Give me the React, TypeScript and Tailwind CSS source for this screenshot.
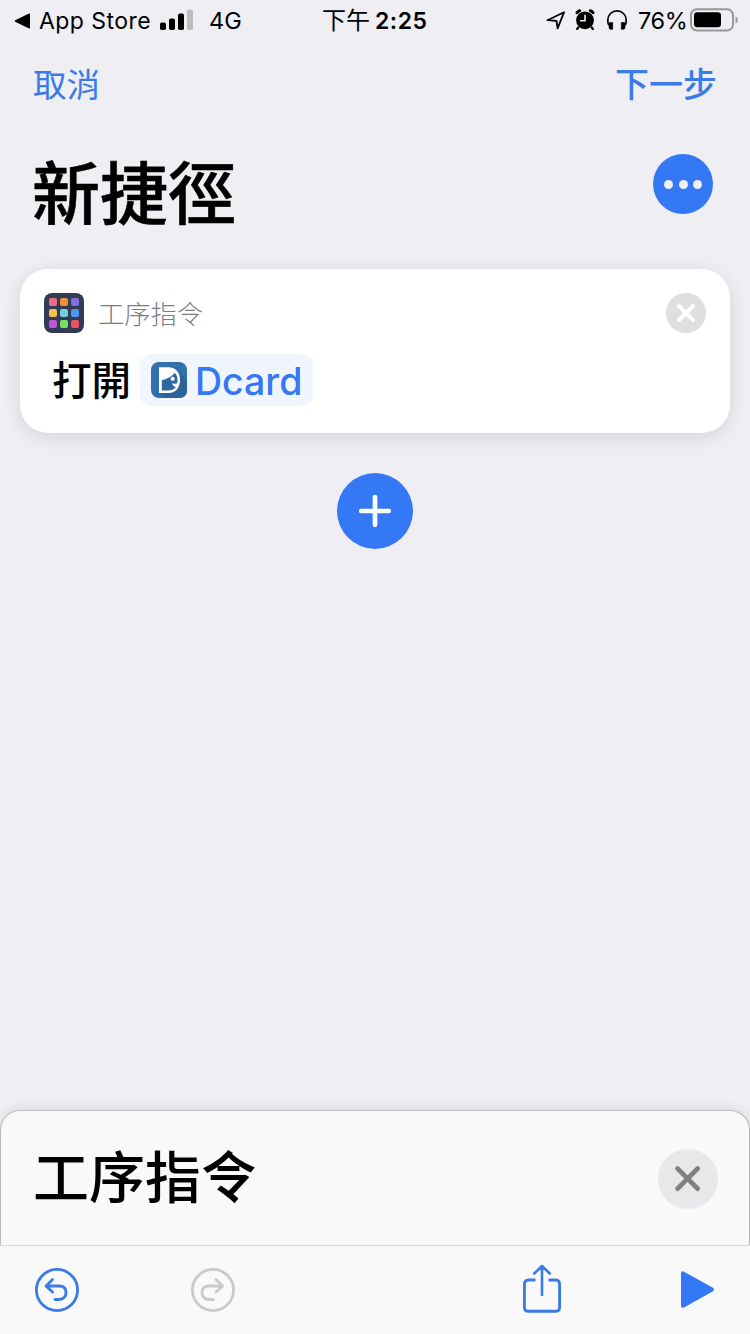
import React from 'react';

const gridColors = ['#ea6f86', '#ee9135', '#7e70e0', '#f4c150', '#6fd0dd', '#4b98ee', '#c455d8', '#76e062', '#ea5360'];

function StatusBar() {
  return (
    <header className="flex h-10 shrink-0 items-center text-black">
      <svg className="ml-[14px] mt-[1px]" width="17" height="16" viewBox="0 0 17 16">
        <path d="M1.2 7.2 14.5.7Q16 .2 16 1.6v12.8q0 1.4-1.5.9L1.2 8.800Q0 8 1.2 7.200z" />
      </svg>
      <span className="ml-[8px] w-[112px] whitespace-nowrap pt-[2px] text-[23px] leading-10 tracking-[0.45px]">App Store</span>
      <svg className="ml-[9px] -mt-[1px]" width="34" height="22" viewBox="0 0 34 22">
        <rect x="0" y="13.5" width="6" height="7.5" rx="1.8" />
        <rect x="9" y="9.5" width="6" height="11.5" rx="1.8" />
        <rect x="18" y="4.5" width="6" height="16.5" rx="1.8" />
        <rect x="27" y="0.5" width="6" height="20.5" rx="1.8" fill="#bdbdc0" />
      </svg>
      <span className="ml-[15px] w-[113px] pt-[2px] text-[23.5px] leading-10">4G</span>
      <span className="flex w-[106px] items-center whitespace-nowrap pt-[2px]">
        <span className="w-[53px] text-[24px] leading-10">下午</span>
        <span className="text-[23px] font-semibold leading-10 tracking-[0.5px]">2:25</span>
      </span>
      <svg className="ml-[118px]" width="20" height="22" viewBox="0 0 20 22" fill="none" stroke="black" strokeWidth="1.8" strokeLinejoin="round">
        <path d="M1.500 11.200 18 3.300 11.600 19.400 10.500 11.800z" />
      </svg>
      <svg className="ml-[8px] -mt-[1px]" width="22" height="24" viewBox="0 0 22 24" fill="none" stroke="black">
        <circle cx="11" cy="12.300" r="8.900" fill="black" stroke="none" />
        <path d="M3 4.700Q4 3.200 5.700 2.700M19 4.700Q18 3.200 16.300 2.700" strokeWidth="3" strokeLinecap="round" />
        <path d="m4.500 19.300-1.400 1.700M17.500 19.300l1.400 1.700" strokeWidth="2.2" strokeLinecap="round" />
        <path d="M11 6.800v6H6" stroke="#efeef4" strokeWidth="1.6" />
      </svg>
      <svg className="ml-[10px]" width="22" height="22" viewBox="0 0 22 22" fill="none" stroke="black">
        <path d="M2.900 16Q1.800 15 1.800 11a9.200 9.200 0 0 1 18.400 0q0 4-1.100 5" strokeWidth="1.7" />
        <path d="M3.500 13.500h3.200v6.800H4.800q-1.800 0-1.800-1.600v-4zM18.500 13.500h-3.200v6.800h1.900q1.800 0 1.800-1.600v-4z" fill="black" strokeWidth="0.6" />
      </svg>
      <span className="ml-[10px] w-[50px] whitespace-nowrap pt-[2px] text-[23.5px] leading-10 tracking-[-0.4px]">76%</span>
      <svg className="ml-[2px] -mt-[1px]" width="48" height="24" viewBox="0 0 48 24">
        <rect x="1" y="1.2" width="42" height="21.3" rx="6" fill="none" stroke="#98989c" strokeWidth="2" />
        <rect x="4" y="4.3" width="27" height="15" rx="3.2" />
        <path d="M45.500 8.200q2.300 1 2.300 3.700t-2.300 3.700z" fill="#98989c" />
      </svg>
    </header>
  );
}

function DcardIcon() {
  return (
    <svg width="36" height="36" viewBox="0 0 36 36" className="shrink-0">
      <rect width="36" height="36" rx="8" fill="#3170ab" />
      <path d="M26 8.500 36 19v9q0 8-8 8H14l-5-5z" fill="#2a6299" />
      <path d="M8 5.300h9.500C25 5.300 29 11 29 18s-4 13-11.500 13H8z" fill="white" />
      <path d="M10.800 18.200Q19.500 16.500 23.800 10.800 26.600 13.500 26.600 18t-2 7.500Q22 28.500 17.300 28.500H10.800z" fill="#2c67a0" />
      <circle cx="21.700" cy="16.800" r="2.1" fill="white" />
      <path d="M21 21.300q2.800 1 6.200-.3l-.8 4.300q-4.200-.2-5.400-4z" fill="white" />
    </svg>
  );
}

function ActionCard() {
  return (
    <section className="mx-5 mt-[29px] h-[164px] shrink-0 rounded-[28px] bg-white px-6 pt-6 shadow-[0_4px_20px_rgba(0,0,0,0.11)]">
      <div className="flex h-10 items-center">
        <div className="grid h-10 w-10 grid-cols-3 gap-[3px] rounded-[8px] bg-[#333a54] p-[5px]">
          {gridColors.map((color) => (
            <span key={color} className="rounded-[2px]" style={{ backgroundColor: color }} />
          ))}
        </div>
        <span className="ml-[14px] pt-[3px] text-[26.3px] font-light leading-10 text-[#7c7c80]">工序指令</span>
        <button className="ml-auto flex h-10 w-10 items-center justify-center rounded-full bg-[#dfdfe1]" aria-label="移除">
          <svg width="20" height="20" viewBox="0 0 20 20" stroke="white" strokeWidth="4" strokeLinecap="round">
            <path d="m3 3 14 14M17 3 3 17" />
          </svg>
        </button>
      </div>
      <div className="mt-[21px] flex h-[52px] items-center">
        <span className="ml-[8px] w-[80px] whitespace-nowrap pt-[2px] text-[39.5px] font-medium leading-[52px] text-black">打開</span>
        <span className="ml-2 flex h-[52px] w-[173px] items-center rounded-[12px] bg-[#f0f5fe] pl-[11px]">
          <DcardIcon />
          <span className="ml-[8px] pt-[4px] text-[37.5px] font-medium leading-[52px] text-[#3478f6]">Dcard</span>
        </span>
      </div>
    </section>
  );
}

function Toolbar() {
  return (
    <nav className="flex h-[89px] shrink-0 items-start border-t border-[#dadadc] bg-[#f9f9f9] text-[#3b7be8]">
      <svg className="ml-[35px] mt-[22px]" width="44" height="44" viewBox="0 0 44 44" fill="none" stroke="currentColor" strokeWidth="2.8" strokeLinecap="round" strokeLinejoin="round">
        <circle cx="22" cy="22" r="20.6" />
        <path d="m17.500 11.500-6.500 6.500 6.500 6M11.500 18H24q7 0 7 6.500T24 31.500h-4" />
      </svg>
      <svg className="ml-[112px] mt-[22px] text-[#cacaca]" width="44" height="44" viewBox="0 0 44 44" fill="none" stroke="currentColor" strokeWidth="2.8" strokeLinecap="round" strokeLinejoin="round">
        <circle cx="22" cy="22" r="20.6" />
        <path d="m25 11.500 6.500 6.500-6.500 6M31 18H18q-7 0-7 6.500t7 7h4.500" />
      </svg>
      <svg className="ml-[287px] mt-[18px]" width="40" height="50" viewBox="0 0 40 50" fill="none" stroke="currentColor" strokeWidth="2.9" strokeLinejoin="round">
        <path d="M13.500 16H6.500Q2.400 16 2.400 20.500v22.500Q2.400 47.300 6.500 47.300h27q4.100 0 4.100-4.300V20.500Q37.600 16 33.500 16h-7" />
        <path d="M20 31V2.500M12.200 9.500 20 2l7.800 7.500" strokeLinecap="round" strokeWidth="2.6" />
      </svg>
      <svg className="ml-[118px] mt-[24px]" width="36" height="39" viewBox="0 0 36 39" fill="#3478f6">
        <path d="M1 3.500Q1 .2 4 1.700L32.500 17.500q3 2 0 4L4 37.500Q1 38.800 1 35.500z" />
      </svg>
    </nav>
  );
}

export default function App() {
  return (
    <main className="flex h-[1334px] w-[750px] flex-col overflow-hidden bg-[#eeeef3] font-[Inter,'Noto_Sans_CJK_TC',sans-serif]">
      <StatusBar />
      <div className="mt-[20px] flex h-12 shrink-0 items-center justify-between px-[33px] text-[34px] leading-[48px] text-[#3b7be8]">
        <button className="pt-[1px] text-[33.5px]">取消</button>
        <button className="pt-[1px] font-medium">下一步</button>
      </div>
      <div className="mt-[46px] flex h-[86px] shrink-0 items-start justify-between pl-[32px] pr-[37px]">
        <h1 className="-mt-[3px] text-[68px] font-medium leading-[86px] text-black [-webkit-text-stroke:0.6px_black]">新捷徑</h1>
        <button className="flex h-[60px] w-[60px] items-center justify-center gap-[5.5px] rounded-full bg-[#3478f6]" aria-label="更多">
          <span className="h-[9px] w-[9px] rounded-full bg-[#efeff4]" />
          <span className="h-[9px] w-[9px] rounded-full bg-[#efeff4]" />
          <span className="h-[9px] w-[9px] rounded-full bg-[#efeff4]" />
        </button>
      </div>
      <ActionCard />
      <button className="mx-auto mt-10 flex h-[76px] w-[76px] shrink-0 items-center justify-center rounded-full bg-[#3478f6]" aria-label="加入">
        <svg width="34" height="34" viewBox="0 0 34 34" stroke="white" strokeWidth="4.7" strokeLinecap="round">
          <path d="M17 3.200v27.600M3.200 17h27.600" />
        </svg>
      </button>
      <section className="mt-auto flex h-[135px] shrink-0 items-start justify-between rounded-t-[20px] border border-b-0 border-[#bdbdc0] bg-[#f9f9f9] pl-[32px] pr-[31px] shadow-[0_0_14px_rgba(0,0,0,0.1)]">
        <h2 className="mt-[32px] text-[56px] font-medium leading-[70px] text-black">工序指令</h2>
        <button className="mt-[38px] flex h-[60px] w-[60px] items-center justify-center rounded-full bg-[#e8e8ea]" aria-label="關閉">
          <svg width="26" height="26" viewBox="0 0 26 26" stroke="#808084" strokeWidth="4.8" strokeLinecap="round">
            <path d="m2.600 2.600 20 20M22.600 2.600l-20 20" />
          </svg>
        </button>
      </section>
      <Toolbar />
    </main>
  );
}
